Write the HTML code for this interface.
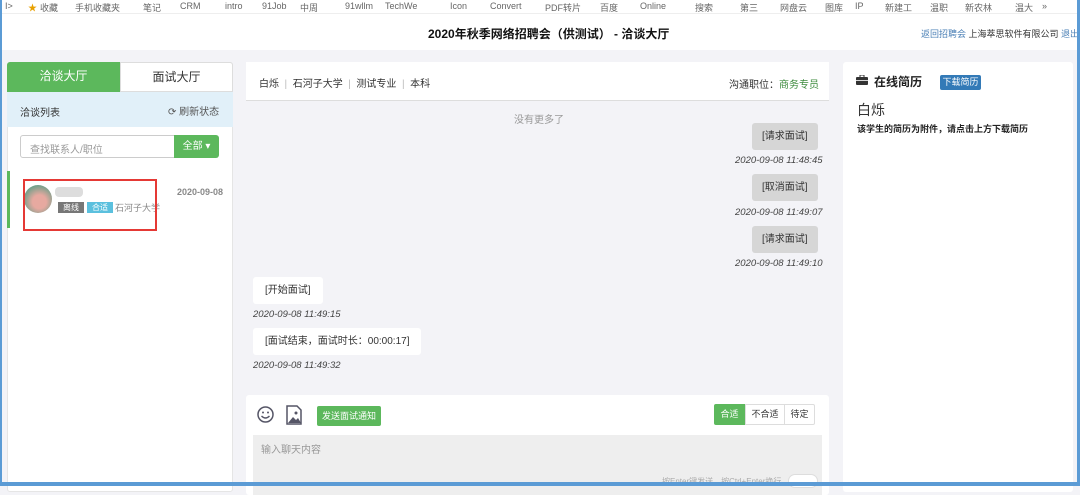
<!DOCTYPE html>
<html><head><meta charset="utf-8"><style>
*{margin:0;padding:0;box-sizing:border-box}
body{width:1080px;height:486px;overflow:hidden;background:#f3f3f7;font-family:"Liberation Sans","Noto Sans CJK SC",sans-serif;font-size:10px;color:#333;position:relative}
.abs{position:absolute}
.bm{top:0;left:0;width:1080px;height:14px;background:#fff;border-bottom:1px solid #eee;font-size:9px;color:#666;white-space:nowrap;overflow:hidden}
.bm span{position:absolute;top:1px}
.hdr{top:14px;left:0;width:1080px;height:36px;background:#fff}
.bub{background:#d6d6d6;border-radius:3px;padding:0 10px;height:27px;line-height:27px;font-size:10px}
.ts{font-style:italic;font-size:9.5px;color:#444}
.wb{background:#fff;border-radius:3px;padding:0 12px;height:27px;line-height:27px}
</style></head><body>
<div class="abs bm">
<span style="left:5px">I></span><span style="left:28px;color:#e8a000">★</span><span style="left:40px">收藏</span><span style="left:75px">手机收藏夹</span><span style="left:143px">笔记</span><span style="left:180px">CRM</span><span style="left:225px">intro</span><span style="left:262px">91Job</span><span style="left:300px">中周</span><span style="left:345px">91wllm</span><span style="left:385px">TechWe</span><span style="left:450px">Icon</span><span style="left:490px">Convert</span><span style="left:545px">PDF转片</span><span style="left:600px">百度</span><span style="left:640px">Online</span><span style="left:695px">搜索</span><span style="left:740px">第三</span><span style="left:780px">网盘云</span><span style="left:825px">图库</span><span style="left:855px">IP</span><span style="left:885px">新建工</span><span style="left:930px">温职</span><span style="left:965px">新农林</span><span style="left:1015px">温大</span><span style="left:1042px">»</span>
</div>
<div class="abs hdr">
<div class="abs" style="left:428px;top:11px;font-size:12px;font-weight:bold;color:#111">2020年秋季网络招聘会（供测试） - 洽谈大厅</div>
<div class="abs" style="left:921px;top:13px;font-size:9px;color:#333"><span style="color:#4a7fb5">返回招聘会</span> 上海萃思软件有限公司 <span style="color:#4a7fb5">退出</span></div>
</div>
<div class="abs" style="left:7px;top:62px;width:226px;height:430px;background:#fff;border:1px solid #e5e5e5;border-radius:3px"></div>
<div class="abs" style="left:7px;top:62px;width:113px;height:30px;background:#5cb85c;color:#fff;font-size:12px;text-align:center;line-height:29px;border-radius:3px 0 0 0">洽谈大厅</div>
<div class="abs" style="left:120px;top:62px;width:113px;height:30px;color:#333;font-size:12px;text-align:center;line-height:29px;border:1px solid #ddd;border-radius:0 3px 0 0">面试大厅</div>
<div class="abs" style="left:7px;top:92px;width:226px;height:35px;background:#e1f0f9"></div>
<div class="abs" style="left:20px;top:104px;font-size:10px">洽谈列表</div>
<div class="abs" style="left:168px;top:103px;font-size:10px;color:#555">⟳ 刷新状态</div>
<div class="abs" style="left:20px;top:135px;width:155px;height:23px;border:1px solid #ccc;border-radius:3px 0 0 3px;color:#999;padding:5px 9px;font-size:10px">查找联系人/职位</div>
<div class="abs" style="left:174px;top:135px;width:45px;height:23px;background:#5cb85c;border-radius:0 3px 3px 0;color:#fff;text-align:center;line-height:23px;font-size:10px">全部 ▾</div>
<div class="abs" style="left:7px;top:171px;width:3px;height:57px;background:#5cb85c"></div>
<div class="abs" style="left:24px;top:185px;width:28px;height:28px;border-radius:50%;background:radial-gradient(circle at 55% 60%,#e7a9a0 30%,#6b9e88 75%)"></div>
<div class="abs" style="left:55px;top:187px;width:28px;height:10px;background:#ddd;border-radius:4px"></div>
<div class="abs" style="left:58px;top:202px;width:26px;height:11px;background:#777;color:#fff;font-size:8px;text-align:center;line-height:11px">离线</div>
<div class="abs" style="left:87px;top:202px;width:26px;height:11px;background:#5bc0de;color:#fff;font-size:8px;text-align:center;line-height:11px">合适</div>
<div class="abs" style="left:115px;top:201px;font-size:9px;color:#888">石河子大学</div>
<div class="abs" style="left:177px;top:187px;font-size:9px;color:#888;font-weight:bold">2020-09-08</div>
<div class="abs" style="left:23px;top:179px;width:134px;height:52px;border:2px solid #e53935"></div>
<div class="abs" style="left:246px;top:62px;width:583px;height:39px;background:#fff;border-bottom:1px solid #ddd"></div>
<div class="abs" style="left:259px;top:75px;font-size:10px">白烁 <span style="color:#bbb">&nbsp;|&nbsp;</span> 石河子大学 <span style="color:#bbb">&nbsp;|&nbsp;</span> 测试专业 <span style="color:#bbb">&nbsp;|&nbsp;</span> 本科</div>
<div class="abs" style="left:729px;top:76px;font-size:10px">沟通职位：<span style="color:#3c8b3c">商务专员</span></div>
<div class="abs" style="left:514px;top:111px;font-size:10px;color:#999">没有更多了</div>
<div class="abs bub" style="left:752px;top:123px">[请求面试]</div>
<div class="abs ts" style="left:735px;top:155px">2020-09-08 11:48:45</div>
<div class="abs bub" style="left:752px;top:174px">[取消面试]</div>
<div class="abs ts" style="left:735px;top:207px">2020-09-08 11:49:07</div>
<div class="abs bub" style="left:752px;top:226px">[请求面试]</div>
<div class="abs ts" style="left:735px;top:258px">2020-09-08 11:49:10</div>
<div class="abs wb" style="left:253px;top:277px">[开始面试]</div>
<div class="abs ts" style="left:253px;top:309px">2020-09-08 11:49:15</div>
<div class="abs wb" style="left:253px;top:328px">[面试结束，面试时长：00:00:17]</div>
<div class="abs ts" style="left:253px;top:360px">2020-09-08 11:49:32</div>
<div class="abs" style="left:246px;top:395px;width:583px;height:100px;background:#fff;border-radius:3px"></div>
<svg class="abs" style="left:257px;top:406px" width="17" height="17" viewBox="0 0 17 17"><circle cx="8.5" cy="8.5" r="7.5" fill="none" stroke="#556" stroke-width="1.5"/><circle cx="6" cy="6.5" r="1" fill="#556"/><circle cx="11" cy="6.5" r="1" fill="#556"/><path d="M4.5 10 Q8.5 14 12.5 10" fill="none" stroke="#556" stroke-width="1.4"/></svg>
<svg class="abs" style="left:286px;top:405px" width="16" height="20" viewBox="0 0 16 20"><path d="M1 1h10l4 4v14H1z" fill="#fff" stroke="#556" stroke-width="1.5"/><circle cx="10" cy="8" r="1.5" fill="#556"/><path d="M2 18l5-6 3 3 2-2 3 5z" fill="#556"/></svg>
<div class="abs" style="left:317px;top:406px;width:64px;height:20px;background:#5cb85c;color:#fff;border-radius:2px;font-size:9px;text-align:center;line-height:20px">发送面试通知</div>
<div class="abs" style="left:714px;top:404px;width:31px;height:21px;background:#5cb85c;color:#fff;font-size:9px;text-align:center;line-height:21px;border-radius:2px 0 0 2px">合适</div>
<div class="abs" style="left:745px;top:404px;width:40px;height:21px;border:1px solid #ddd;font-size:9px;text-align:center;line-height:19px">不合适</div>
<div class="abs" style="left:784px;top:404px;width:31px;height:21px;border:1px solid #ddd;font-size:9px;text-align:center;line-height:19px;border-radius:0 2px 2px 0">待定</div>
<div class="abs" style="left:253px;top:435px;width:569px;height:60px;background:#eee"></div>
<div class="abs" style="left:261px;top:441px;font-size:10px;color:#999">输入聊天内容</div>
<div class="abs" style="left:662px;top:476px;font-size:8px;color:#aaa">按Enter键发送，按Ctrl+Enter换行</div>
<div class="abs" style="left:788px;top:474px;width:30px;height:14px;background:#fff;border:1px solid #ddd;border-radius:7px"></div>
<div class="abs" style="left:843px;top:62px;width:230px;height:430px;background:#fff;border-radius:3px"></div>
<svg class="abs" style="left:856px;top:75px" width="12" height="10" viewBox="0 0 12 10"><rect x="0" y="2" width="12" height="8" rx="1" fill="#333"/><rect x="4" y="0" width="4" height="3" fill="none" stroke="#333" stroke-width="1"/><rect x="0" y="5" width="12" height="0.8" fill="#fff"/></svg>
<div class="abs" style="left:874px;top:73px;font-size:12px;font-weight:bold;color:#222">在线简历</div>
<div class="abs" style="left:940px;top:75px;width:41px;height:15px;background:#337ab7;color:#fff;font-size:9px;text-align:center;line-height:15px;border-radius:2px">下载简历</div>
<div class="abs" style="left:857px;top:100px;font-size:14px;color:#333">白烁</div>
<div class="abs" style="left:857px;top:122px;font-size:9px;font-weight:bold;color:#222">该学生的简历为附件，请点击上方下载简历</div>
<div class="abs" style="left:0;top:0;width:2px;height:486px;background:#5b9bd5"></div>
<div class="abs" style="left:0;top:482px;width:1080px;height:4px;background:#5b9bd5"></div>
<div class="abs" style="left:1077px;top:0;width:3px;height:486px;background:#5b9bd5"></div>
</body></html>
